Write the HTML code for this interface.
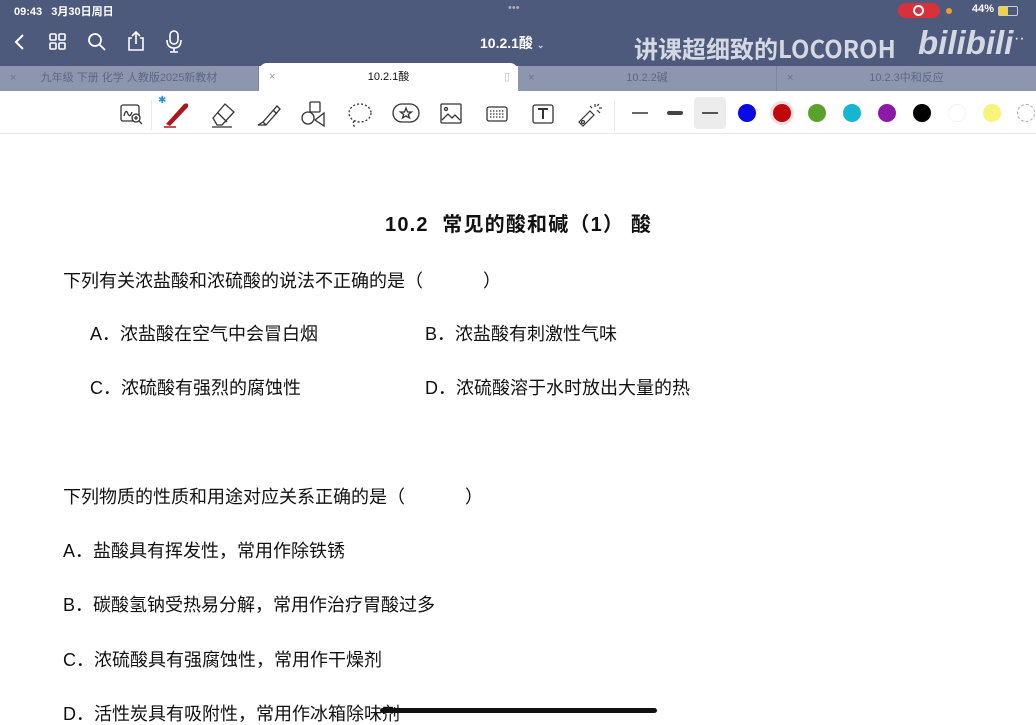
<!DOCTYPE html>
<html><head><meta charset="utf-8"><style>
*{margin:0;padding:0;box-sizing:border-box}
body{width:1036px;height:720px;overflow:hidden;background:#fff;position:relative;font-family:"Liberation Sans","Noto Sans CJK SC",sans-serif}
.hdr{position:absolute;left:0;top:0;width:1036px;height:66px;background:#4e5a7c}
.abs{position:absolute;white-space:nowrap}
.tab{position:absolute;top:66px;height:25px;background:#8d96ae;color:#5e6785;font-size:11px;line-height:25px;text-align:center;border-right:1px solid #7d86a0}
.tab .x{position:absolute;left:10px;top:0;font-size:11px;color:#6a7390}
.tb{position:absolute;left:0;top:91px;width:1036px;height:43px;background:#fff;border-bottom:1px solid #e6e6e6}
.dot{position:absolute;top:104px;width:18px;height:18px;border-radius:50%}
.t{position:absolute;font-size:18px;color:#111;white-space:nowrap;line-height:22px}
svg{position:absolute}
</style></head><body>
<div class="hdr"></div>
<div class="abs" style="left:14px;top:3px;color:#fff;font-size:11px;font-weight:bold">09:43&nbsp;&nbsp; 3月30日周日</div>
<div class="abs" style="left:508px;top:2px;color:#aab;font-size:11px">•••</div>
<div class="abs" style="left:898px;top:3px;width:42px;height:15px;background:#d8313a;border-radius:8px"></div>
<div class="abs" style="left:913px;top:5px;width:11px;height:11px;border:2px solid #fff;border-radius:50%"></div>
<div class="abs" style="left:946px;top:8px;width:6px;height:6px;background:#f29a2e;border-radius:50%"></div>
<div class="abs" style="left:972px;top:3px;color:#fff;font-size:11px;font-weight:bold">44%</div>
<div class="abs" style="left:998px;top:6px;width:20px;height:10px;border:1px solid #ccc;border-radius:2px"><div style="width:9px;height:8px;background:#f4d23a"></div></div>
<svg style="left:10px;top:32px" width="20" height="20"><path d="M13 3 L6 10 L13 17" stroke="#fff" stroke-width="2" fill="none"/></svg>
<svg style="left:49px;top:33px" width="18" height="18" fill="none" stroke="#fff" stroke-width="1.6"><rect x="1" y="1" width="6" height="6" rx="1"/><rect x="10" y="1" width="6" height="6" rx="1"/><rect x="1" y="10" width="6" height="6" rx="1"/><rect x="10" y="10" width="6" height="6" rx="1"/></svg>
<svg style="left:87px;top:32px" width="20" height="20" fill="none" stroke="#fff" stroke-width="1.8"><circle cx="8" cy="8" r="6"/><path d="M12.5 12.5 L18 18"/></svg>
<svg style="left:126px;top:30px" width="20" height="22" fill="none" stroke="#fff" stroke-width="1.6"><path d="M6 8 H3 V20 H17 V8 H14 M10 14 V2 M6 6 L10 2 L14 6"/></svg>
<svg style="left:165px;top:30px" width="18" height="24" fill="none" stroke="#fff" stroke-width="1.6"><rect x="5" y="1" width="8" height="13" rx="4"/><path d="M2 10 Q2 18 9 18 Q16 18 16 10 M9 18 V22 M5 22 H13"/></svg>
<div class="abs" style="left:480px;top:33px;color:#fff;font-size:14px;font-weight:bold">10.2.1酸 <span style="font-size:9px;color:#ccd">⌄</span></div>
<div class="abs" style="left:634px;top:32px;color:rgba(235,238,245,0.85);font-size:24px;font-weight:bold;font-family:'Noto Sans CJK SC',sans-serif;line-height:32px">讲课超细致的LOCOROH</div>
<div class="abs" style="left:918px;top:22px;color:rgba(235,238,245,0.85);font-size:33px;font-weight:bold;font-style:italic;line-height:42px">bilibili</div>
<div class="abs" style="left:1014px;top:30px;color:#fff;font-size:16px">··</div>
<div class="tab" style="left:0;width:259px"><span class="x">×</span>九年级 下册 化学 人教版2025新教材</div>
<div class="abs" style="left:259px;top:63px;width:259px;height:29px;background:#fff;border-radius:8px 8px 0 0;font-size:11px;color:#111;text-align:center;line-height:29px">10.2.1酸<span style="position:absolute;left:10px;color:#999">×</span><span style="position:absolute;right:8px;color:#bbb">▯</span></div>
<div class="tab" style="left:518px;width:259px"><span class="x">×</span>10.2.2碱</div>
<div class="tab" style="left:777px;width:259px;border:none"><span class="x">×</span>10.2.3中和反应</div>
<div class="tb"></div>
<svg style="left:120px;top:102px" width="24" height="24" fill="none" stroke="#333" stroke-width="1.3"><rect x="1" y="3" width="18" height="16" rx="2"/><path d="M4 14 Q6 6 8 12 Q10 16 12 10"/><circle cx="16" cy="16" r="4" fill="#fff"/><path d="M14 16H18M16 14V18M19 19L22 22"/></svg>
<div class="abs" style="left:151px;top:100px;width:1px;height:30px;background:#e8e8e8"></div>
<div class="abs" style="left:158px;top:95px;color:#2b8fe0;font-size:10px">✱</div>
<svg style="left:162px;top:100px" width="30" height="28"><path d="M4 24 L22 4 Q27 2 26 7 L8 26 Z" fill="#b0151d"/><path d="M2 27 H14" stroke="#b0151d" stroke-width="1.5"/></svg>
<svg style="left:208px;top:100px" width="32" height="28" fill="none" stroke="#333" stroke-width="1.3"><path d="M5 18 L17 4 L26 12 L14 25 L9 25 Z M10 13 L19 22"/><path d="M4 27 H24"/></svg>
<svg style="left:255px;top:100px" width="28" height="28" fill="none" stroke="#333" stroke-width="1.3"><path d="M3 25 L8 22 L22 6 L25 9 L11 25 L3 25 M8 22 L11 25 M18 10 L22 14"/></svg>
<svg style="left:300px;top:101px" width="28" height="26" fill="none" stroke="#333" stroke-width="1.3"><rect x="10" y="1" width="10" height="10" rx="1"/><circle cx="8" cy="17" r="6"/><path d="M24 12 L15 19 L24 25 Z"/></svg>
<svg style="left:346px;top:101px" width="28" height="28" fill="none" stroke="#333" stroke-width="1.3" stroke-dasharray="2 2"><ellipse cx="14" cy="12" rx="11" ry="9"/><path d="M8 20 Q6 24 10 27"/></svg>
<svg style="left:391px;top:102px" width="30" height="24" fill="none" stroke="#333" stroke-width="1.3"><rect x="2" y="2" width="26" height="18" rx="9"/><path d="M15 6 L16.5 10 L20.5 10 L17.3 12.5 L18.5 16 L15 14 L11.5 16 L12.7 12.5 L9.5 10 L13.5 10 Z"/></svg>
<svg style="left:440px;top:103px" width="22" height="22" fill="none" stroke="#333" stroke-width="1.3"><rect x="1" y="1" width="20" height="19" rx="1"/><circle cx="6" cy="6" r="1.5"/><path d="M2 17 L8 11 L12 15 L15 12 L20 17"/></svg>
<svg style="left:486px;top:105px" width="22" height="18" fill="none" stroke="#333" stroke-width="1.3"><rect x="1" y="2" width="20" height="14" rx="2"/><path d="M4 6H18M4 9H18M4 12H18" stroke-dasharray="1.5 1.5"/></svg>
<svg style="left:530px;top:103px" width="26" height="22" fill="none" stroke="#333" stroke-width="1.3"><rect x="3" y="2" width="20" height="18" rx="2"/><path d="M8 6H18M13 6V16" stroke-width="2"/></svg>
<svg style="left:575px;top:100px" width="28" height="28" fill="none" stroke="#333" stroke-width="1.2"><path d="M4 22 L15 11 L19 15 L8 26 Z"/><circle cx="8" cy="22" r="1.5"/><path d="M20 4V7M24 8H27M22 10L25 13M17 8L15 6M24 4L22 6"/></svg>
<div class="abs" style="left:614px;top:100px;width:1px;height:30px;background:#e8e8e8"></div>
<div class="abs" style="left:632px;top:112px;width:16px;height:1.5px;background:#666"></div>
<div class="abs" style="left:667px;top:111px;width:16px;height:4px;background:#444;border-radius:2px"></div>
<div class="abs" style="left:694px;top:97px;width:32px;height:32px;background:#ececec;border-radius:4px"></div>
<div class="abs" style="left:702px;top:112px;width:16px;height:2px;background:#555"></div>
<div class="dot" style="left:738px;background:#0a0ae8"></div>
<div class="dot" style="left:773px;background:#c0080c;box-shadow:0 0 0 3px #f1dede"></div>
<div class="dot" style="left:808px;background:#5ba22c"></div>
<div class="dot" style="left:843px;background:#15b7d0"></div>
<div class="dot" style="left:878px;background:#8c1aa6"></div>
<div class="dot" style="left:913px;background:#000"></div>
<div class="dot" style="left:948px;background:#fff;border:1px solid #f4f4f4"></div>
<div class="dot" style="left:983px;background:#f6f57a"></div>
<div class="dot" style="left:1017px;border:1px dashed #aaa"></div>
<div class="t" style="left:385px;top:214px;font-size:20px;font-weight:bold;letter-spacing:1.2px">10.2&nbsp; 常见的酸和碱（1） 酸</div>
<div class="t" style="left:63px;top:270px">下列有关浓盐酸和浓硫酸的说法不正确的是（&nbsp;&nbsp;&nbsp;&nbsp;&nbsp;&nbsp;&nbsp;&nbsp;&nbsp;&nbsp;&nbsp; ）</div>
<div class="t" style="left:90px;top:323px">A．浓盐酸在空气中会冒白烟</div>
<div class="t" style="left:425px;top:323px">B．浓盐酸有刺激性气味</div>
<div class="t" style="left:90px;top:377px">C．浓硫酸有强烈的腐蚀性</div>
<div class="t" style="left:425px;top:377px">D．浓硫酸溶于水时放出大量的热</div>
<div class="t" style="left:63px;top:486px">下列物质的性质和用途对应关系正确的是（&nbsp;&nbsp;&nbsp;&nbsp;&nbsp;&nbsp;&nbsp;&nbsp;&nbsp;&nbsp;&nbsp; ）</div>
<div class="t" style="left:63px;top:540px">A．盐酸具有挥发性，常用作除铁锈</div>
<div class="t" style="left:63px;top:594px">B．碳酸氢钠受热易分解，常用作治疗胃酸过多</div>
<div class="t" style="left:63px;top:649px">C．浓硫酸具有强腐蚀性，常用作干燥剂</div>
<div class="t" style="left:63px;top:703px">D．活性炭具有吸附性，常用作冰箱除味剂</div>
<div class="abs" style="left:380px;top:708px;width:277px;height:5px;background:#111;border-radius:3px"></div>
</body></html>
